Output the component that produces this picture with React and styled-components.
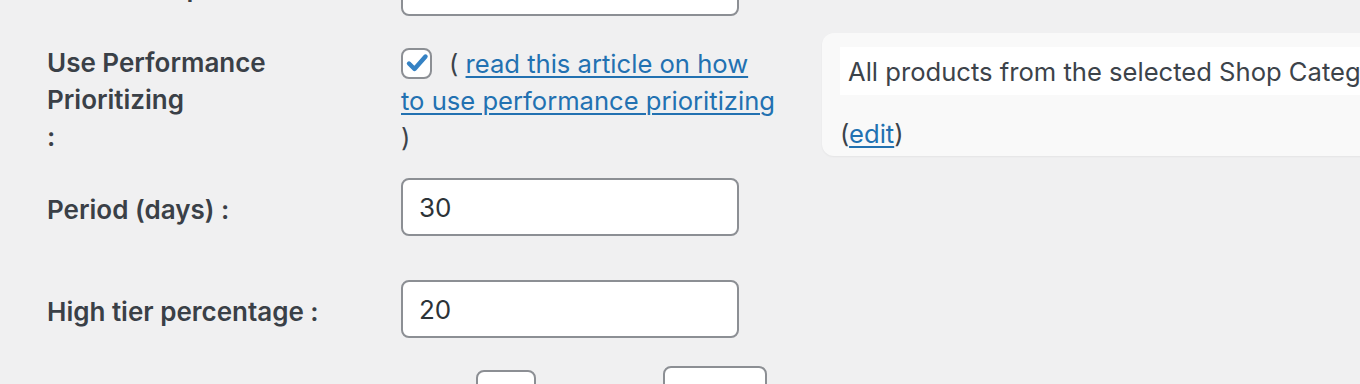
import styled, { createGlobalStyle } from 'styled-components';

const GlobalStyle = createGlobalStyle`
    html, body {
        margin: 0;
        padding: 0;
        background: #f0f0f1;
        overflow: hidden;
    }
    body {
        font-family: Inter, "Noto Sans", "Liberation Sans", sans-serif;
        color: #3c434a;
        font-size: 25.6px;
        line-height: 37px;
    }
`;

const Form = styled.div`
    margin-top: -42px;
    padding-left: 47px;
    width: 1500px;
`;

const Row = styled.div`
    display: grid;
    grid-template-columns: 354px 1fr;
    align-items: ${p => (p.$top ? 'start' : 'center')};
    margin-top: ${p => p.$gap || 0}px;
`;

const Label = styled.div`
    font-size: 26px;
    font-weight: 600;
    color: #3a4047;
    padding-top: ${p => p.$shift || 0}px;
`;

const Field = styled.div`
    display: flex;
    align-items: ${p => (p.$top ? 'flex-start' : 'center')};
`;

const TextInput = styled.input`
    box-sizing: border-box;
    width: ${p => p.$w || 338}px;
    height: ${p => p.$h || 58}px;
    margin-top: ${p => p.$offset || 0}px;
    border: 2px solid #8c8f94;
    border-radius: 8px;
    background: #fff;
    padding: 0 16px;
    font-family: inherit;
    font-size: 26px;
    color: #2c3338;
    outline: none;
`;

const Check = styled.span`
    box-sizing: border-box;
    display: inline-flex;
    align-items: center;
    justify-content: center;
    width: 31px;
    height: 31px;
    border: 2px solid #8c8f94;
    border-radius: 8px;
    background: #fff;
    vertical-align: middle;
    margin: -6px 17px 0 0;
`;

const Note = styled.div`
    width: 380px;
    padding-top: 4px;
    white-space: nowrap;
`;

const Link = styled.a`
    color: #2271b1;
    text-decoration: underline;
    text-underline-offset: 3px;
    text-decoration-thickness: 2px;
`;

const Panel = styled.div`
    box-sizing: border-box;
    width: 700px;
    margin: -8px 0 0 41px;
    padding: 14px 0 4px 18px;
    background: #f9f9f9;
    border-radius: 12px;
    box-shadow: 0 1px 2px rgba(0, 0, 0, 0.05);
`;

const Summary = styled.div`
    background: #fff;
    height: 48px;
    padding-left: 8px;
    display: flex;
    align-items: center;
    white-space: nowrap;
`;

const EditLine = styled.div`
    margin-top: 20px;
`;

const Gap = styled.span`
    display: inline-block;
    width: ${p => p.$w}px;
`;

const CheckMark = () => (
    <svg width="24" height="24" viewBox="0 0 24 24">
        <path
            d="M4 12.5 L9.5 18 L20.5 5.5"
            fill="none"
            stroke="#3582c4"
            strokeWidth="4.4"
            strokeLinecap="round"
            strokeLinejoin="round"
        />
    </svg>
);

const App = () => {
    return (
        <>
            <GlobalStyle />
            <Form>
                <Row>
                    <Label>Load more products :</Label>
                    <Field>
                        <TextInput defaultValue="" />
                    </Field>
                </Row>

                <Row $top $gap={25}>
                    <Label $shift={3}>
                        Use Performance
                        <br />Prioritizing
                        <br />:
                    </Label>
                    <Field $top>
                        <Note>
                            <Check><CheckMark /></Check>
                            ( <Link href="#">read this article on how<br />to use performance prioritizing</Link>
                            <br />)
                        </Note>
                        <Panel>
                            <Summary>All products from the selected Shop Categories will be included</Summary>
                            <EditLine>(<Link href="#">edit</Link>)</EditLine>
                        </Panel>
                    </Field>
                </Row>

                <Row $gap={22}>
                    <Label $shift={5}>Period (days) :</Label>
                    <Field>
                        <TextInput defaultValue="30" />
                    </Field>
                </Row>

                <Row $gap={44}>
                    <Label $shift={5}>High tier percentage :</Label>
                    <Field>
                        <TextInput defaultValue="20" />
                    </Field>
                </Row>

                <Row $gap={26}>
                    <Label>Low tier range :</Label>
                    <Field>
                        <Gap $w={75}>from</Gap>
                        <TextInput $w={60} $h={58} $offset={6} />
                        <Gap $w={127}>&nbsp;% to</Gap>
                        <TextInput $w={104} $h={60} />
                    </Field>
                </Row>
            </Form>
        </>
    );
};

export default App;
